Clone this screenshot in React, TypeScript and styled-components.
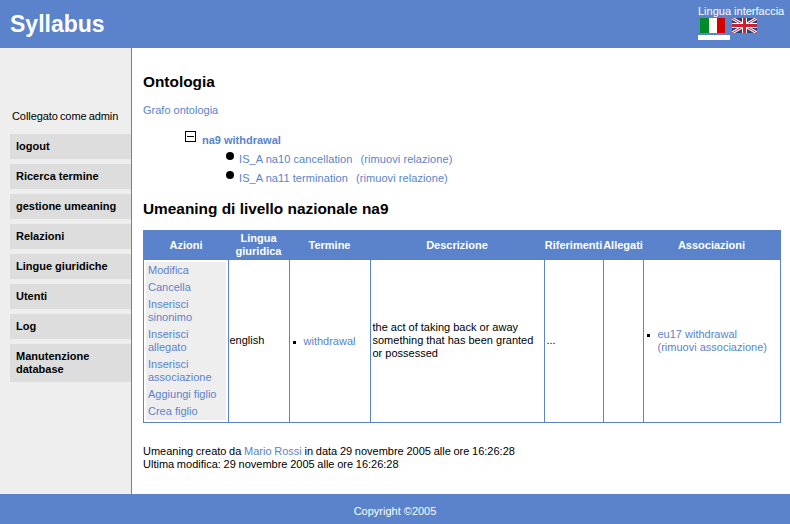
import React from "react";
import styled, { createGlobalStyle } from "styled-components";

const BLUE = "#5a83cc";

const Global = createGlobalStyle`
  html, body { margin: 0; padding: 0; background: #fff; }
  body { font-family: "Liberation Sans", Arial, sans-serif; font-size: 11px; color: #000; }
  a { color: ${BLUE}; text-decoration: none; }
`;

const Page = styled.div`
  width: 790px;
  height: 524px;
  display: flex;
  flex-direction: column;
  overflow: hidden;
`;
const Header = styled.header`
  height: 48px;
  background: ${BLUE};
  display: flex;
  justify-content: space-between;
  flex: none;
`;
const Logo = styled.h1`
  margin: 0;
  padding: 12px 0 0 10px;
  font-size: 23px;
  line-height: 25px;
  font-weight: bold;
  color: #fff;
`;
const LangBox = styled.div`
  width: 92px;
  padding-top: 5px;
  color: #fff;
  font-size: 11px;
  line-height: 12px;
`;
const Flags = styled.div`
  display: flex;
  gap: 7px;
  padding: 1px 0 0 2px;
  height: 15px;
  svg { display: block; }
`;
const LangBar = styled.div`
  width: 32px;
  height: 5px;
  margin-top: 2px;
  background: #fff;
`;
const Body = styled.div`
  flex: 1;
  display: flex;
  min-height: 0;
`;
const Side = styled.nav`
  width: 121px;
  flex: none;
  background: #eee;
  border-right: 1px solid ${BLUE};
  padding: 62px 0 0 10px;
`;
const Logged = styled.div`
  line-height: 13px;
  padding: 0 0 0 2px;
  margin-bottom: 11px;
  word-spacing: -0.8px;
  letter-spacing: -0.08px;
`;
const MenuItem = styled.a`
  display: block;
  background: #ddd;
  color: #000;
  font-weight: bold;
  line-height: 13px;
  padding: 6px;
  margin-bottom: 5px;
`;
const Main = styled.main`
  flex: 1;
  padding: 25px 9px 0 11px;
  min-width: 0;
`;
const Title = styled.h2`
  margin: 0;
  font-size: 15.4px;
  line-height: 18px;
  font-weight: bold;
`;
const GraphLink = styled.a`
  display: block;
  margin-top: 13px;
  line-height: 13px;
`;
const Tree = styled.div`
  margin-top: 14px;
  padding-left: 42px;
  height: 58px;
`;
const TreeRoot = styled.div`
  display: flex;
  align-items: flex-start;
  height: 19px;
  a { font-weight: bold; padding: 3px 0 0 6px; line-height: 13px; }
  svg { display: block; flex: none; }
`;
const TreeLeaf = styled.div`
  display: flex;
  align-items: flex-start;
  height: 19px;
  padding-left: 41px;
  line-height: 13px;
  a { padding-left: 5px; padding-top: 3px; letter-spacing: 0.07px; }
  a span { margin-left: 5px; }
`;
const Dot = styled.i`
  display: block;
  width: 8px;
  height: 8px;
  margin-top: 2px;
  border-radius: 50%;
  background: #000;
  flex: none;
`;
const SectionTitle = styled(Title)`
  margin-top: 11px;
`;
const Table = styled.table`
  margin-top: 12px;
  width: 638px;
  height: 193px;
  border-collapse: collapse;
  table-layout: fixed;
  border: 1px solid ${BLUE};
`;
const Th = styled.th<{ $w: number }>`
  width: ${p => p.$w}px;
  height: 28px;
  padding: 0;
  background: ${BLUE};
  color: #fff;
  font-size: 11px;
  line-height: 13px;
  font-weight: bold;
  text-align: center;
`;
const Td = styled.td<{ $pad?: number }>`
  padding: 0 0 0 ${p => p.$pad ?? 1}px;
  border: 1px solid ${BLUE};
  line-height: 13px;
  vertical-align: middle;
`;
const TextCell = styled(Td)`
  padding-bottom: 2px;
`;
const ActionsCell = styled(Td)`
  padding: 2px;
`;
const Actions = styled.div`
  background: #eee;
  padding: 2px 0 2px 2px;
  display: flex;
  flex-direction: column;
  gap: 4px;
  a { display: block; line-height: 13px; }
`;
const Bullets = styled.ul`
  margin: 0;
  padding: 0 0 0 13px;
  list-style: none;
  li { position: relative; line-height: 13px; }
  li::before {
    content: "";
    position: absolute;
    left: -11px;
    top: 6px;
    width: 3px;
    height: 3px;
    background: #000;
  }
`;
const Meta = styled.p`
  margin: 22px 0 0;
  line-height: 13px;
  word-spacing: -0.35px;
`;
const Footer = styled.footer`
  height: 30px;
  flex: none;
  background: ${BLUE};
  color: #fff;
  text-align: center;
  line-height: 34px;
`;

const ItalyFlag = () => (
  <svg width="25" height="15" viewBox="0 0 25 15">
    <rect width="9" height="15" fill="#008c26" />
    <rect x="9" width="8" height="15" fill="#fff" />
    <rect x="17" width="8" height="15" fill="#d40000" />
  </svg>
);
const UkFlag = () => (
  <svg width="25" height="15" viewBox="0 0 25 15">
    <rect width="25" height="15" fill="#2a3f86" />
    <path d="M0 0L25 15M25 0L0 15" stroke="#fff" strokeWidth="3" />
    <path d="M0 0L25 15M25 0L0 15" stroke="#cc1f2f" strokeWidth="1" />
    <path d="M12.5 0V15M0 7.5H25" stroke="#fff" strokeWidth="5" />
    <path d="M12.5 0V15M0 7.5H25" stroke="#cc1f2f" strokeWidth="3" />
  </svg>
);
const MinusBox = () => (
  <svg width="11" height="11" viewBox="0 0 11 11">
    <rect x="0.5" y="0.5" width="10" height="10" fill="#fff" stroke="#000" />
    <path d="M2 5.5H9" stroke="#000" />
  </svg>
);

const menu = ["logout", "Ricerca termine", "gestione umeaning", "Relazioni", "Lingue giuridiche", "Utenti", "Log", "Manutenzione database"];
const actions = ["Modifica", "Cancella", "Inserisci sinonimo", "Inserisci allegato", "Inserisci associazione", "Aggiungi figlio", "Crea figlio"];
const columns: [string, number][] = [
  ["Azioni", 84], ["Lingua giuridica", 61], ["Termine", 81], ["Descrizione", 174],
  ["Riferimenti", 59], ["Allegati", 40], ["Associazioni", 137],
];

export default function App() {
  return (
    <Page>
      <Global />
      <Header>
        <Logo>Syllabus</Logo>
        <LangBox>
          Lingua interfaccia
          <Flags><ItalyFlag /><UkFlag /></Flags>
          <LangBar />
        </LangBox>
      </Header>
      <Body>
        <Side>
          <Logged>Collegato come admin</Logged>
          {menu.map(m => <MenuItem href="#" key={m}>{m}</MenuItem>)}
        </Side>
        <Main>
          <Title>Ontologia</Title>
          <GraphLink href="#">Grafo ontologia</GraphLink>
          <Tree>
            <TreeRoot><MinusBox /><a href="#">na9 withdrawal</a></TreeRoot>
            <TreeLeaf><Dot /><a href="#">IS_A na10 cancellation <span>(rimuovi relazione)</span></a></TreeLeaf>
            <TreeLeaf><Dot /><a href="#">IS_A na11 termination <span>(rimuovi relazione)</span></a></TreeLeaf>
          </Tree>
          <SectionTitle>Umeaning di livello nazionale na9</SectionTitle>
          <Table>
            <thead>
              <tr>{columns.map(([c, w]) => <Th key={c} $w={w}>{c}</Th>)}</tr>
            </thead>
            <tbody>
              <tr>
                <ActionsCell>
                  <Actions>{actions.map(a => <a href="#" key={a}>{a}</a>)}</Actions>
                </ActionsCell>
                <TextCell>english</TextCell>
                <Td><Bullets><li><a href="#">withdrawal</a></li></Bullets></Td>
                <TextCell $pad={2}>the act of taking back or away something that has been granted or possessed</TextCell>
                <TextCell $pad={2}>...</TextCell>
                <Td />
                <Td><Bullets><li><a href="#">eu17 withdrawal<br />(rimuovi associazione)</a></li></Bullets></Td>
              </tr>
            </tbody>
          </Table>
          <Meta>
            Umeaning creato da <a href="#">Mario Rossi</a> in data 29 novembre 2005 alle ore 16:26:28<br />
            Ultima modifica: 29 novembre 2005 alle ore 16:26:28
          </Meta>
        </Main>
      </Body>
      <Footer>Copyright ©2005</Footer>
    </Page>
  );
}
